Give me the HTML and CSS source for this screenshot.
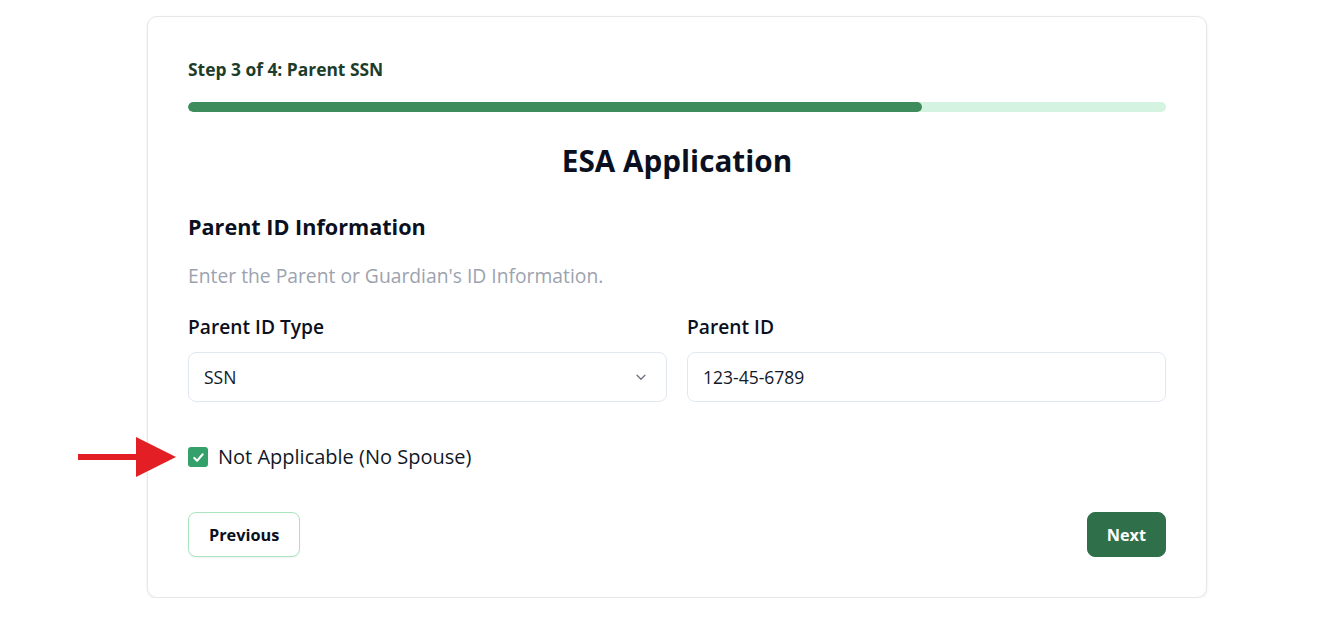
FILE: index.html
```html
<!DOCTYPE html>
<html lang="en">
<head>
<meta charset="utf-8">
<title>ESA Application</title>
<link rel="stylesheet" href="styles.css">
</head>
<body>
<main class="page">
  <div class="card">
    <div class="step">Step 3 of 4: Parent SSN</div>
    <div class="progress"><div class="progress-fill" style="width:75%"></div></div>
    <h1 class="title">ESA Application</h1>
    <h2 class="section">Parent ID Information</h2>
    <p class="hint">Enter the Parent or Guardian's ID Information.</p>
    <div class="fields">
      <div class="field">
        <label class="label">Parent ID Type</label>
        <div class="control select">
          <span>SSN</span>
          <svg class="chev" width="14" height="14" viewBox="0 0 16 16" fill="none" stroke="#6b7280" stroke-width="1.5" stroke-linecap="round" stroke-linejoin="round"><path d="M3.5 6l4.5 4.5L12.5 6"/></svg>
        </div>
      </div>
      <div class="field">
        <label class="label">Parent ID</label>
        <div class="control">123-45-6789</div>
      </div>
    </div>
    <div class="check-row">
      <div class="arrow">
        <div class="arrow-shaft"></div>
        <div class="arrow-head"></div>
      </div>
      <span class="checkbox">
        <svg width="15" height="15" viewBox="0 0 16 16" fill="none" stroke="#fff" stroke-width="2.2" stroke-linecap="round" stroke-linejoin="round"><path d="M3.5 8.5l3 3 6-7"/></svg>
      </span>
      <span class="check-label">Not Applicable (No Spouse)</span>
    </div>
    <div class="actions">
      <button class="btn btn-prev">Previous</button>
      <button class="btn btn-next">Next</button>
    </div>
  </div>
</main>
</body>
</html>
```
FILE: styles.css
```css
* { box-sizing: border-box; }
html, body { margin: 0; padding: 0; background: #ffffff; }
body {
  font-family: "Open Sans", "Noto Sans", sans-serif;
  color: #111827;
}
.page {
  padding: 16px 0 0 147px;
  display: flex;
}
.card {
  width: 1060px;
  border: 1px solid #e5e7eb;
  border-radius: 10px;
  box-shadow: 0 1px 3px rgba(0,0,0,0.08);
  padding: 40px 40px 40px;
  background: #fff;
}
.step {
  font-size: 17.4px;
  line-height: 24px;
  font-weight: 700;
  color: #1c3d2a;
  margin-bottom: 21px;
}
.progress {
  height: 10px;
  border-radius: 5px;
  background: #d5f3e1;
  overflow: hidden;
}
.progress-fill {
  height: 100%;
  background: #3e8b5c;
  border-radius: 5px;
}
.title {
  margin: 31px 0 0;
  text-align: center;
  font-size: 29.7px;
  line-height: 36px;
  font-weight: 700;
  color: #0b1020;
}
.section {
  margin: 34px 0 0;
  font-size: 21.6px;
  line-height: 28px;
  font-weight: 700;
  color: #0b1020;
}
.hint {
  margin: 21px 0 0;
  font-size: 19.3px;
  line-height: 28px;
  color: #9ca3af;
}
.fields {
  margin-top: 23px;
  display: grid;
  grid-template-columns: 1fr 1fr;
  column-gap: 20px;
}
.label {
  display: block;
  font-size: 19.2px;
  line-height: 28px;
  font-weight: 600;
  color: #0b1020;
  margin-bottom: 11px;
}
.control {
  height: 50px;
  border: 1px solid #e2e8f0;
  border-radius: 8px;
  padding: 0 15px;
  display: flex;
  align-items: center;
  font-size: 17.5px;
  color: #111827;
}
.select { justify-content: space-between; }
.chev { margin-right: 3px; }
.check-row {
  position: relative;
  margin-top: 41px;
  height: 28px;
  display: flex;
  align-items: center;
  gap: 10px;
}
.checkbox {
  width: 20px;
  height: 20px;
  border-radius: 3px;
  background: #34a06a;
  display: flex;
  align-items: center;
  justify-content: center;
}
.check-label {
  font-size: 20px;
  line-height: 28px;
  color: #111827;
}
.arrow {
  position: absolute;
  left: -110px;
  top: -6px;
  width: 98px;
  height: 40px;
  display: flex;
  align-items: center;
}
.arrow-shaft {
  width: 60px;
  height: 6px;
  background: #e31e24;
}
.arrow-head {
  width: 0;
  height: 0;
  border-top: 20px solid transparent;
  border-bottom: 20px solid transparent;
  border-left: 40px solid #e31e24;
}
.actions {
  margin-top: 41px;
  display: flex;
  justify-content: space-between;
}
.btn {
  height: 45px;
  border-radius: 8px;
  font-family: inherit;
  font-size: 16.3px;
  font-weight: 700;
  padding: 0 20px;
  cursor: pointer;
}
.btn-prev {
  background: #fff;
  border: 1px solid #a9e5bf;
  color: #0b1020;
  box-shadow: 0 1px 2px rgba(0,0,0,0.06);
}
.btn-next {
  padding: 0 19px;
  background: #2f6f49;
  border: 1px solid #2f6f49;
  color: #fff;
}
```
